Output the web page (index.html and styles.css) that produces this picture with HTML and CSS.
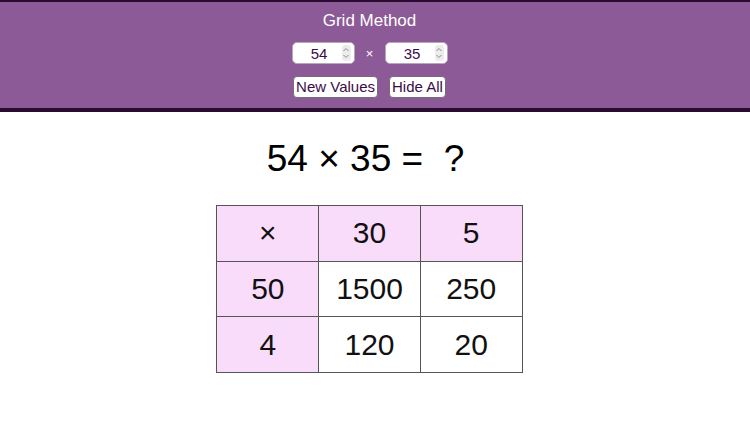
FILE: index.html
```html
<!DOCTYPE html>
<html>
<head>
<meta charset="utf-8">
<link rel="stylesheet" href="styles.css">
</head>
<body>
<header class="topbar">
  <div class="inner">
    <div class="title">Grid Method</div>
    <div class="inputs">
      <div class="field"><span class="val">54</span><span class="spin"><svg width="8" height="14" viewBox="0 0 8 14"><path d="M1.5 5 L4 2.5 L6.5 5 M1.5 9 L4 11.5 L6.5 9" fill="none" stroke="#8a8a8a" stroke-width="1"/></svg></span></div>
      <span class="times">×</span>
      <div class="field"><span class="val">35</span><span class="spin"><svg width="8" height="14" viewBox="0 0 8 14"><path d="M1.5 5 L4 2.5 L6.5 5 M1.5 9 L4 11.5 L6.5 9" fill="none" stroke="#8a8a8a" stroke-width="1"/></svg></span></div>
    </div>
    <div class="buttons">
      <button class="btn">New Values</button>
      <button class="btn">Hide All</button>
    </div>
  </div>
</header>
<main class="content">
  <div class="equation">54 × 35 = &nbsp;?</div>
  <table class="grid">
    <tr><td class="head">×</td><td class="head">30</td><td class="head">5</td></tr>
    <tr><td class="head">50</td><td>1500</td><td>250</td></tr>
    <tr><td class="head">4</td><td>120</td><td>20</td></tr>
  </table>
</main>
</body>
</html>
```

FILE: styles.css
```css
html, body {
  margin: 0;
  padding: 0;
  background: #ffffff;
  font-family: "Liberation Sans", Arial, sans-serif;
}
.topbar {
  background: #8c5a96;
  border-top: 2px solid #2a0c30;
  border-bottom: 4px solid #2a0c30;
  height: 106px;
  box-sizing: content-box;
}
.inner {
  margin-right: 11px;
  display: flex;
  flex-direction: column;
  align-items: center;
}
.title {
  color: #ffffff;
  font-size: 17px;
  line-height: 20px;
  padding-top: 9px;
}
.inputs {
  display: flex;
  align-items: center;
  margin-top: 11px;
}
.field {
  width: 63px;
  height: 22px;
  box-sizing: border-box;
  background: #ffffff;
  border: 1px solid #b9a6bd;
  border-radius: 5px;
  display: flex;
  align-items: center;
  padding: 0 2px 0 4px;
}
.val {
  flex: 1;
  text-align: center;
  font-size: 15px;
  color: #3a0d45;
}
.spin {
  width: 9px;
  height: 16px;
  background: #ececec;
  border-radius: 3px;
  display: flex;
  align-items: center;
  justify-content: center;
  margin-right: 1px;
}
.times {
  color: #ffffff;
  font-size: 13px;
  width: 30px;
  text-align: center;
}
.buttons {
  display: flex;
  gap: 11px;
  margin-top: 12px;
}
.btn {
  height: 22px;
  background: #ffffff;
  border: 1px solid #7a6a7c;
  border-radius: 4px;
  font-family: "Liberation Sans", Arial, sans-serif;
  font-size: 15px;
  color: #3a0d45;
  padding: 0 2px;
  line-height: 20px;
}
.content {
  margin-right: 11px;
  display: flex;
  flex-direction: column;
  align-items: center;
}
.equation {
  font-size: 37px;
  line-height: 44px;
  margin-top: 25px;
  padding-right: 8px;
  color: #000000;
}
.grid {
  margin-top: 24px;
  border-collapse: collapse;
}
.grid td {
  width: 100.7px;
  height: 54.7px;
  border: 1px solid #555555;
  text-align: center;
  font-size: 30px;
  color: #111111;
  padding: 0;
}
.grid td.head {
  background: #f9dcfa;
}
```
